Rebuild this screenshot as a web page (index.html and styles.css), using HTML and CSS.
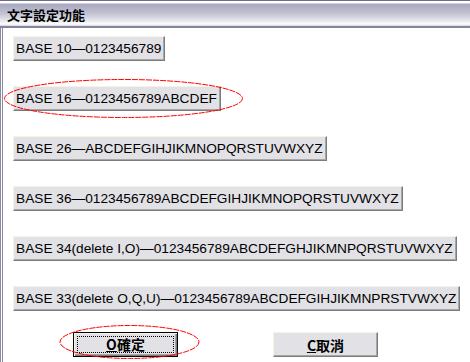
FILE: index.html
```html
<!DOCTYPE html>
<html lang="zh-Hant">
<head>
    <meta charset="UTF-8">
    <title>文字設定功能</title>
    <link rel="stylesheet" href="styles.css">
</head>
<body>
    <div class="window">
        <div class="titlebar">文字設定功能</div>

        <div class="frame">
            <div class="base-list">
                <button class="btn">BASE 10—0123456789</button>
                <button class="btn">BASE 16—0123456789ABCDEF</button>
                <button class="btn">BASE 26—ABCDEFGIHJIKMNOPQRSTUVWXYZ</button>
                <button class="btn">BASE 36—0123456789ABCDEFGIHJIKMNOPQRSTUVWXYZ</button>
                <button class="btn">BASE 34(delete I,O)—0123456789ABCDEFGHJIKMNPQRSTUVWXYZ</button>
                <button class="btn">BASE 33(delete O,Q,U)—0123456789ABCDEFGIHJIKMNPRSTVWXYZ</button>
            </div>

            <div class="actions">
                <button class="btn btn-cmd btn-default"><span class="focus"><u>O</u>確定</span></button>
                <button class="btn btn-cmd"><span class="focus-none"><u>C</u>取消</span></button>
            </div>
        </div>

        <!-- red hand-drawn marks -->
        <svg class="marks" width="470" height="362" viewBox="0 0 470 362">
            <ellipse cx="123.5" cy="98.5" rx="119" ry="19" />
            <ellipse cx="129.5" cy="342" rx="69.5" ry="16.5" />
        </svg>
    </div>
</body>
</html>
```

FILE: styles.css
```css
body {
    margin: 0;
    padding: 0;
    background-color: #fff;
    font-family: "Liberation Sans", Arial, sans-serif;
}
.window {
    position: relative;
    width: 470px;
    height: 362px;
    overflow: hidden;
    background-color: #fff;
}
.titlebar {
    height: 28px;
    box-sizing: border-box;
    padding: 6px 0 0 7px;
    border-top: 1px solid #6c6c88;
    border-bottom: 2px solid #84849c;
    background: linear-gradient(#ffffff 0, #ffffff 2px, #a6a6be 3px, #c4c4d4 13px, #eeeef4 21px, #ffffff 23px, #d4d4da 25px);
    font-family: "Noto Sans CJK TC", sans-serif;
    font-weight: bold;
    font-size: 13px;
    line-height: 15px;
    color: #000;
}
.frame {
    height: 334px;
    box-sizing: border-box;
    border-left: 3px double #8a8aa4;
    padding: 8px 0 0 10px;
}
.base-list {
    display: flex;
    flex-direction: column;
    align-items: flex-start;
    gap: 25px;
}
.btn {
    height: 25px;
    box-sizing: border-box;
    margin: 0;
    padding: 0 3px 0 2px;
    background-color: #e2e1e6;
    border: 1px solid;
    border-color: #f4f3e4 #7c7c7c #7c7c7c #f4f3e4;
    box-shadow: inset -1px -1px 0 #a6a6a6;
    font-family: "Liberation Sans", Arial, sans-serif;
    font-size: 13.7px;
    line-height: 22px;
    color: #000;
    text-align: left;
    white-space: nowrap;
}
.actions {
    display: flex;
    gap: 95px;
    margin: 21px 0 0 60px;
}
.btn-cmd {
    width: 105px;
    padding: 0;
    text-align: center;
    font-family: "Noto Sans CJK TC", sans-serif;
    font-weight: bold;
    font-size: 14px;
}
.btn-default {
    border: 1px solid #000;
    box-shadow: inset 1px 1px 0 #f4f3e4, inset -1px -1px 0 #7c7c7c, inset -2px -2px 0 #a6a6a6;
    padding: 3px;
}
.focus {
    display: block;
    height: 100%;
    box-sizing: border-box;
    border: 1px dotted #000;
    line-height: 15px;
}
.focus-none {
    display: block;
    line-height: 22px;
}
.marks {
    position: absolute;
    left: 0;
    top: 0;
    pointer-events: none;
}
.marks ellipse {
    fill: none;
    stroke: #f00;
    stroke-width: 1;
    stroke-dasharray: 6 1;
}
```
